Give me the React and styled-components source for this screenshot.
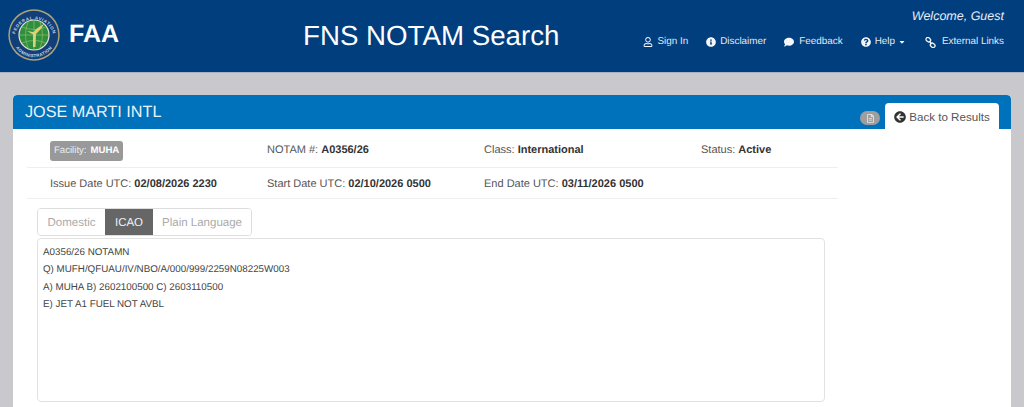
import React from "react";
import styled, { createGlobalStyle } from "styled-components";
import { FaArrowCircleLeft, FaInfoCircle, FaComment, FaQuestionCircle, FaCaretDown, FaRegUser, FaRegFileAlt } from "react-icons/fa";

const Global = createGlobalStyle`
  html, body { margin: 0; padding: 0; background: #c9c8cd; overflow: hidden; }
  body { font-family: "Liberation Sans", Arial, sans-serif; height: 407px; text-rendering: geometricPrecision; }
`;
const Page = styled.div`height: 407px; overflow: hidden;`;
const Header = styled.header`
  height: 72px; background: #003e7e; border-bottom: 1px solid #a9b3c6;
  display: grid; grid-template-columns: 1fr auto; position: relative; color: #fff;
`;
const Brand = styled.div`display: flex; align-items: center; gap: 9px; padding: 0 0 2px 8px; height: 70px;`;
const BrandName = styled.span`font-size: 25px; font-weight: 700; margin-bottom: 2px;`;
const AppTitle = styled.h1`
  position: absolute; left: 303px; top: 20px; margin: 0;
  font-size: 27.7px; line-height: 32px; font-weight: 400; color: #fff;
`;
const Right = styled.div`display: flex; flex-direction: column; align-items: flex-end; padding: 9px 20px 0 0;`;
const Welcome = styled.div`font-size: 12.5px; line-height: 15px; font-style: italic; color: #e8eef6;`;
const Nav = styled.nav`display: flex; gap: 18px; margin-top: 11px; font-size: 9.9px; line-height: 14px; color: #e3e9f2;`;
const NavItem = styled.span`display: inline-flex; align-items: center; gap: ${p => p.$gap || 4}px;
  svg { font-size: 10px; color: #f4f6fa; flex: none; }`;
const Caret = styled(FaCaretDown)`
  && { font-size: 8px; margin-left: -1px; }
`;
const LastNavItem = styled(NavItem)`margin-left: 1px;`;
const Main = styled.main`padding: 22px 13px 0;`;
const Panel = styled.section`background: #fff; border-radius: 4px 4px 0 0; height: 330px; overflow: hidden;`;
const PanelHead = styled.div`
  height: 34px; background: #0072bc; display: flex; align-items: flex-end; justify-content: space-between;
  padding: 0 12px 0 12px; border-radius: 4px 4px 0 0; position: relative;
`;
const PanelTitle = styled.h2`margin: 0 0 7px; font-size: 16.2px; line-height: 20px; font-weight: 400; color: #e9f2f9; align-self: flex-end;`;
const HeadActions = styled.div`display: flex; align-items: flex-end; gap: 5px;`;
const DocBadge = styled.span`
  width: 20px; height: 14px; border-radius: 7px; background: #9e9e9e; margin-bottom: 4px;
  display: flex; align-items: center; justify-content: center; color: #e8e8e8; font-size: 9px;
`;
const BackButton = styled.button`
  height: 27px; width: 114px; border: 0; background: #fff; color: #555; border-radius: 4px 4px 0 0;
  font: 400 11.6px "Liberation Sans", Arial, sans-serif; display: flex; align-items: center; justify-content: center;
  gap: 3px; padding: 0; margin-bottom: -1px; position: relative;
  svg { color: #333; font-size: 12px; }
`;
const Info = styled.div`width: 811px; margin-left: 14px;`;
const InfoRow = styled.div`
  box-sizing: border-box; height: ${p => p.$h}px; display: grid; grid-template-columns: repeat(4, 217px);
  padding: ${p => p.$top}px 0 0 23px; align-items: center; border-bottom: 1px solid #eeeeee;
  font-size: 11px; color: #555;
  b { color: #333; font-weight: 700; }
`;
const FacilityTag = styled.span`
  justify-self: start; background: #999; color: #eee; border-radius: 3px; height: 20px; padding: 0 4px;
  display: inline-flex; align-items: center; gap: 4px; font-size: 9.6px; margin-top: 2px;
  b { color: #fff; }
`;
const Tabs = styled.div`display: inline-flex; margin: 9px 0 0 24px; height: 28px; border: 1px solid #ddd; border-radius: 4px; overflow: hidden; box-sizing: border-box;`;
const Tab = styled.span`
  display: flex; align-items: center; justify-content: center; width: ${p => p.$w}px; padding-top: 1px;
  font-size: 11.5px; background: ${p => p.$active ? "#666" : "#fff"}; color: ${p => p.$active ? "#f0f0f0" : "#aaa"};
`;
const NotamBox = styled.div`
  margin: 2px 0 0 24px; width: 788px; height: 164px; box-sizing: border-box;
  border: 1px solid #e2e2e2; border-radius: 4px; padding: 5px 5px; font-size: 9.8px; line-height: 17.33px; color: #444;
`;
const Line = styled.div``;

function Seal() {
  return (
    <svg width="52" height="52" viewBox="0 0 52 52" aria-label="FAA seal">
      <circle cx="26" cy="26" r="25.7" fill="#a9a27a" />
      <circle cx="26" cy="26" r="24.2" fill="#123f78" />
      <circle cx="26" cy="26" r="15.6" fill="#e6e8d8" />
      <circle cx="26" cy="26" r="14.4" fill="#2f8f3f" />
      <path d="M12 26h28M26 12v28M14 18q12 5 24 0M14 34q12-5 24 0M20 13q-5 13 0 26M32 13q5 13 0 26" stroke="#8dbb66" strokeWidth=".7" fill="none" />
      <path d="M36 15 C31 18 27.5 20 25.5 23 L19 22 L25 25.5 L25 38 L27.5 38 L28 25 C31 22 34 19 36 15Z" fill="#d9d27a" />
      <defs>
        <path id="sealTop" d="M6.5 28 A19.6 19.6 0 0 1 45.5 28" />
        <path id="sealBot" d="M3.8 26 A22.2 22.2 0 0 0 48.2 26" />
      </defs>
      <text fontSize="4.4" fontWeight="700" fill="#c9d4e2" fontFamily="Liberation Sans" letterSpacing=".6">
        <textPath href="#sealTop" startOffset="50%" textAnchor="middle">FEDERAL AVIATION</textPath>
      </text>
      <text fontSize="4.4" fontWeight="700" fill="#c9d4e2" fontFamily="Liberation Sans" letterSpacing=".3">
        <textPath href="#sealBot" startOffset="50%" textAnchor="middle">ADMINISTRATION</textPath>
      </text>
    </svg>
  );
}

function ChainIcon() {
  return (
    <svg width="11" height="11" viewBox="0 0 12 12" fill="none" stroke="currentColor" strokeWidth="1.4">
      <rect x="0.9" y="0.9" width="5.4" height="4" rx="2" transform="rotate(40 3.6 2.9)" />
      <rect x="5.7" y="7.1" width="5.4" height="4" rx="2" transform="rotate(40 8.4 9.1)" />
      <path d="M5 4.6 L7 7.4" />
    </svg>
  );
}

export default function App() {
  return (
    <Page>
      <Global />
      <Header>
        <Brand><Seal /><BrandName>FAA</BrandName></Brand>
        <AppTitle>FNS NOTAM Search</AppTitle>
        <Right>
          <Welcome>Welcome, Guest</Welcome>
          <Nav>
            <NavItem><FaRegUser />Sign In</NavItem>
            <NavItem><FaInfoCircle />Disclaimer</NavItem>
            <NavItem $gap={5}><FaComment />Feedback</NavItem>
            <NavItem><FaQuestionCircle />Help<Caret /></NavItem>
            <LastNavItem $gap={6}><ChainIcon />External Links</LastNavItem>
          </Nav>
        </Right>
      </Header>
      <Main>
        <Panel>
          <PanelHead>
            <PanelTitle>JOSE MARTI INTL</PanelTitle>
            <HeadActions>
              <DocBadge><FaRegFileAlt /></DocBadge>
              <BackButton><FaArrowCircleLeft />Back to Results</BackButton>
            </HeadActions>
          </PanelHead>
          <Info>
            <InfoRow $h={39} $top={3}>
              <FacilityTag>Facility: <b>MUHA</b></FacilityTag>
              <span>NOTAM #: <b>A0356/26</b></span>
              <span>Class: <b>International</b></span>
              <span>Status: <b>Active</b></span>
            </InfoRow>
            <InfoRow $h={31} $top={2}>
              <span>Issue Date UTC: <b>02/08/2026 2230</b></span>
              <span>Start Date UTC: <b>02/10/2026 0500</b></span>
              <span>End Date UTC: <b>03/11/2026 0500</b></span>
            </InfoRow>
          </Info>
          <Tabs>
            <Tab $w={67}>Domestic</Tab>
            <Tab $w={48} $active>ICAO</Tab>
            <Tab $w={98}>Plain Language</Tab>
          </Tabs>
          <NotamBox>
            <Line>A0356/26 NOTAMN</Line>
            <Line>Q) MUFH/QFUAU/IV/NBO/A/000/999/2259N08225W003</Line>
            <Line>A) MUHA B) 2602100500 C) 2603110500</Line>
            <Line>E) JET A1 FUEL NOT AVBL</Line>
          </NotamBox>
        </Panel>
      </Main>
    </Page>
  );
}
